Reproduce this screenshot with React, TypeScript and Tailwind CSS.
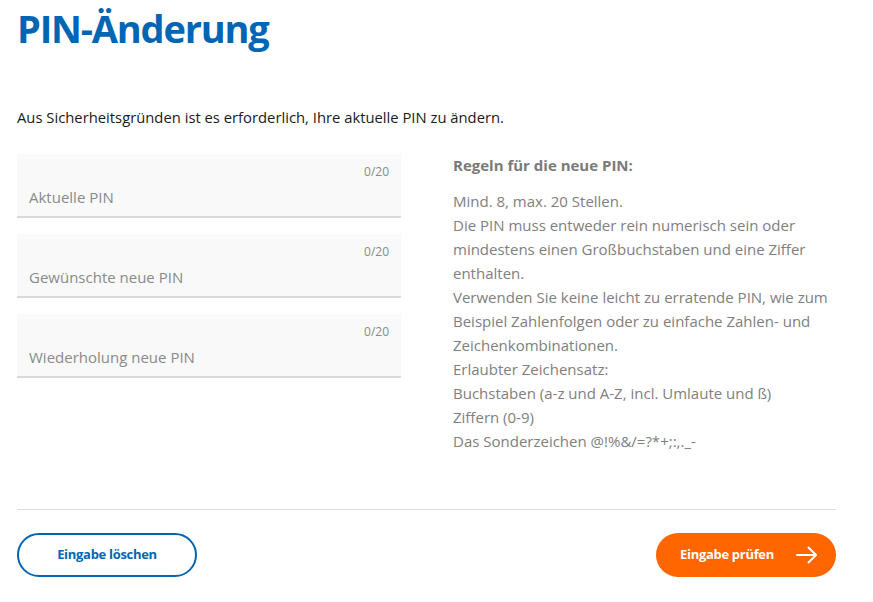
const fields = ['Aktuelle PIN', 'Gewünschte neue PIN', 'Wiederholung neue PIN']

const rules = [
  'Mind. 8, max. 20 Stellen.',
  'Die PIN muss entweder rein numerisch sein oder mindestens einen Großbuchstaben und eine Ziffer enthalten.',
  'Verwenden Sie keine leicht zu erratende PIN, wie zum Beispiel Zahlenfolgen oder zu einfache Zahlen- und Zeichenkombinationen.',
  'Erlaubter Zeichensatz:',
  'Buchstaben (a-z und A-Z, incl. Umlaute und ß)',
  'Ziffern (0-9)',
  'Das Sonderzeichen @!%&/=?*+;:,._-',
]

function PinField({ label }: { label: string }) {
  return (
    <div className="flex h-[64px] flex-col border-b-2 border-[#d9d9d9] bg-[#f9f9f9] px-3">
      <div className="pt-[10px] text-right text-[12px] leading-[16px] text-[#8a8a8a]">0/20</div>
      <div className="pt-[7px] text-[15px] leading-[20px] text-[#8a8a8a]">{label}</div>
    </div>
  )
}

export default function App() {
  return (
    <div className="min-h-[602px] w-full bg-white px-[17px] font-['Open_Sans','Noto_Sans',sans-serif]">
      <div className="w-[819px]">
        <h1 className="pt-[4px] text-[38px] font-bold leading-[48px] tracking-[-1.2px] text-[#0066b3]">
          PIN-Änderung
        </h1>

        <p className="mt-[55px] text-[14.8px] leading-[20px] text-[#1a1a1a]">
          Aus Sicherheitsgründen ist es erforderlich, Ihre aktuelle PIN zu ändern.
        </p>

        <div className="mt-[27px] flex gap-[52px]">
          <div className="flex w-[384px] flex-col gap-[16px]">
            {fields.map((f) => (
              <PinField key={f} label={f} />
            ))}
          </div>

          <div className="flex-1 -mt-[1px] text-[15px] leading-[24px] text-[#808080]">
            <p className="font-bold text-[#7a7a7a]">Regeln für die neue PIN:</p>
            <ul className="mt-[12px]">
              {rules.map((r) => (
                <li key={r}>{r}</li>
              ))}
            </ul>
          </div>
        </div>

        <div className="mt-[56px] border-t border-[#dcdcdc]" />

        <div className="mt-[23px] flex items-center justify-between">
          <button className="flex h-[44px] w-[180px] items-center justify-center rounded-full border-2 border-[#0066b3] text-[13px] font-bold tracking-[-0.3px] text-[#0066b3]">
            Eingabe löschen
          </button>
          <button className="flex h-[44px] w-[180px] items-center justify-center gap-[22px] rounded-full bg-[#ff6600] pl-[6px] text-[13px] font-bold tracking-[-0.3px] text-white">
            Eingabe prüfen
            <svg width="22" height="18" viewBox="0 0 22 18" fill="none" stroke="currentColor" strokeWidth="2" strokeLinecap="round" strokeLinejoin="round">
              <path d="M1 9h19" />
              <path d="M12.5 1.5 20 9l-7.5 7.5" />
            </svg>
          </button>
        </div>
      </div>
    </div>
  )
}
